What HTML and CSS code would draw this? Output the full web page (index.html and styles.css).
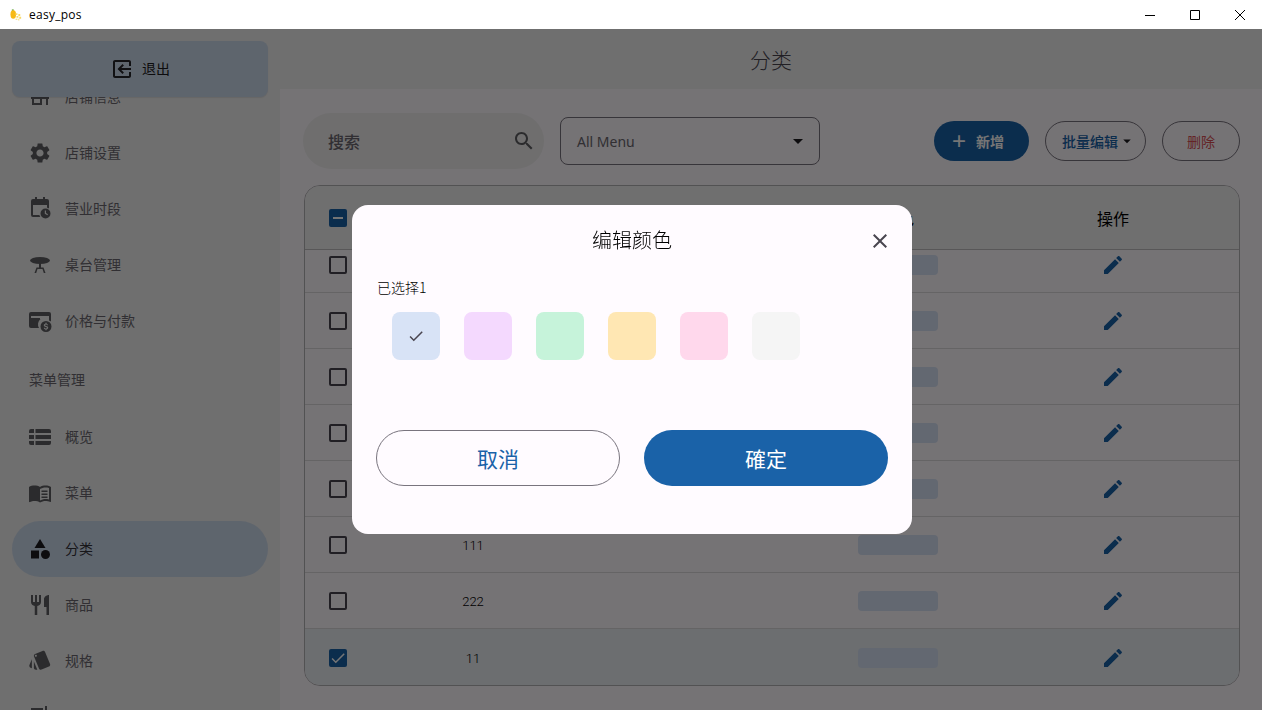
FILE: index.html
```html
<!DOCTYPE html>
<html lang="zh-CN">
<head>
    <meta charset="UTF-8">
    <meta name="viewport" content="width=device-width, initial-scale=1.0">
    <title>easy_pos</title>
    <link rel="stylesheet" href="styles.css">
</head>
<body>
    <svg class="sprite" aria-hidden="true">
        <symbol id="i-edit" viewBox="0 0 24 24"><path d="M3 17.25V21h3.75L17.81 9.94l-3.75-3.75L3 17.25zM20.71 7.04c.39-.39.39-1.02 0-1.41l-2.34-2.34c-.39-.39-1.02-.39-1.41 0l-1.83 1.83 3.75 3.75 1.83-1.83z"/></symbol>
        <symbol id="i-check" viewBox="0 0 24 24"><path d="M9 16.17L4.83 12l-1.42 1.41L9 19 21 7l-1.41-1.41z"/></symbol>
        <symbol id="i-close" viewBox="0 0 24 24"><path d="M19 6.41L17.59 5 12 10.59 6.41 5 5 6.41 10.59 12 5 17.59 6.41 19 12 13.41 17.59 19 19 17.59 13.41 12z"/></symbol>
        <symbol id="i-drop" viewBox="0 0 24 24"><path d="M7 10l5 5 5-5z"/></symbol>
    </svg>

    <div class="titlebar">
        <svg class="app_icon" viewBox="0 0 14 12">
            <path fill="#5aa02c" d="M2 0h2v1.500H2z"/>
            <ellipse cx="3.500" cy="5.500" rx="3" ry="4.500" fill="#f7b916"/>
            <path fill="#f7d96a" d="M6 4h2v2H6zM9 5h2v2H9zM7 7h2v2H7zM10 8h2v2h-2zM6 10h2v1H6zM9 10h1v2H9z"/>
        </svg>
        <span class="app_name">easy_pos</span>
        <div class="win_btns">
            <svg viewBox="0 0 10 10"><path d="M0 5.500h10" /></svg>
            <svg viewBox="0 0 10 10"><path d="M.5.500h9v9h-9z" /></svg>
            <svg viewBox="0 0 10 10"><path d="M0 0l10 10M10 0L0 10" /></svg>
        </div>
    </div>

    <div class="app">
        <aside class="sidebar">
            <button class="logout">
                <svg class="icon flip" viewBox="0 0 24 24"><path d="M10.09 15.59L11.5 17l5-5-5-5-1.41 1.41L12.67 11H3v2h9.67l-2.58 2.59zM19 3H5c-1.11 0-2 .9-2 2v4h2V5h14v14H5v-4H3v4c0 1.1.89 2 2 2h14c1.1 0 2-.9 2-2V5c0-1.1-.9-2-2-2z"/></svg>
                <span class="txt">退出</span>
            </button>
            <div class="nav_item">
                <svg class="icon" viewBox="0 0 24 24"><path d="M20 4H4v2h16V4zm1 10v-2l-1-5H4l-1 5v2h1v6h10v-6h4v6h2v-6h1zm-9 4H6v-4h6v4z"/></svg>
                <span class="txt">店铺信息</span>
            </div>
            <div class="nav_item">
                <svg class="icon" viewBox="0 0 24 24"><path d="M19.14 12.94c.04-.3.06-.61.06-.94 0-.32-.02-.64-.07-.94l2.03-1.58c.18-.14.23-.41.12-.61l-1.92-3.32c-.12-.22-.37-.29-.59-.22l-2.39.96c-.5-.38-1.03-.7-1.62-.94L14.4 2.81c-.04-.24-.24-.41-.48-.41h-3.84c-.24 0-.43.17-.47.41l-.36 2.54c-.59.24-1.13.57-1.62.94l-2.39-.96c-.22-.08-.47 0-.59.22L2.74 8.87c-.12.21-.08.47.12.61l2.03 1.58c-.05.3-.09.63-.09.94s.02.64.07.94l-2.03 1.58c-.18.14-.23.41-.12.61l1.92 3.32c.12.22.37.29.59.22l2.39-.96c.5.38 1.03.7 1.62.94l.36 2.54c.05.24.24.41.48.41h3.84c.24 0 .44-.17.47-.41l.36-2.54c.59-.24 1.13-.56 1.62-.94l2.39.96c.22.08.47 0 .59-.22l1.92-3.32c.12-.22.07-.47-.12-.61l-2.01-1.58zM12 15.6c-1.98 0-3.6-1.62-3.6-3.6s1.62-3.6 3.6-3.6 3.6 1.62 3.6 3.6-1.62 3.6-3.6 3.6z"/></svg>
                <span class="txt">店铺设置</span>
            </div>
            <div class="nav_item nudge">
                <svg class="icon" viewBox="0 0 24 24"><path d="M7 1h2v2h6V1h2v2h2a2 2 0 0 1 2 2v7.600a6.500 6.500 0 0 0-2-.9V9H5v10h6.400c.2.7.5 1.400.9 2H5a2 2 0 0 1-2-2V5a2 2 0 0 1 2-2h2V1z"/><path fill-rule="evenodd" d="M17.500 12.500a5 5 0 1 1 0 10 5 5 0 0 1 0-10zm-.7 2v3.300l2.600 1.500.6-1-2-1.200v-2.600h-1.200z"/></svg>
                <span class="txt">营业时段</span>
            </div>
            <div class="nav_item">
                <svg class="icon" viewBox="0 0 24 24"><ellipse cx="12" cy="7.500" rx="10" ry="3.500"/><path d="M11 10h2v4.500h2.500l2 5.500h-1.700L14.500 16h-5l-1.300 4H6.500l2-5.500H11z"/></svg>
                <span class="txt">桌台管理</span>
            </div>
            <div class="nav_item">
                <svg class="icon" viewBox="0 0 24 24"><path d="M3 3h18a2 2 0 0 1 2 2v7.500a7 7 0 0 0-2-1.100V7H3v2h9v1H1V5a2 2 0 0 1 2-2zM1 10h11.500a7 7 0 0 0-1.500 9H3a2 2 0 0 1-2-2z"/><path fill-rule="evenodd" d="M18 12a5.500 5.500 0 1 1 0 11 5.500 5.500 0 0 1 0-11zm-.6 1.800v.9c-1 .2-1.600.8-1.600 1.600 0 1 .9 1.400 1.900 1.700.9.200 1.200.4 1.200.8s-.4.7-1 .7c-.7 0-1-.3-1.100-.8h-1c.1 1 .8 1.500 1.600 1.600v.9h1.200v-.9c1-.2 1.600-.8 1.600-1.600 0-1.100-.9-1.500-1.900-1.800-.9-.2-1.200-.4-1.200-.7s.3-.6.9-.6.9.3 1 .7h1c-.1-.8-.6-1.400-1.400-1.600v-.9z"/></svg>
                <span class="txt">价格与付款</span>
            </div>
            <div class="nav_label">菜单管理</div>
            <div class="nav_item">
                <svg class="icon" viewBox="0 0 24 24"><path d="M1 6a2 2 0 0 1 2-2h3v4H1zM7.500 4H21a2 2 0 0 1 2 2v2H7.500zM1 10h5v4H1zM7.500 10H23v4H7.500zM1 16h5v4H3a2 2 0 0 1-2-2zM7.500 16H23v2a2 2 0 0 1-2 2H7.500z"/></svg>
                <span class="txt">概览</span>
            </div>
            <div class="nav_item">
                <svg class="icon" viewBox="0 0 24 24"><path d="M21 5c-1.110-.35-2.330-.5-3.500-.5-1.950 0-4.050.4-5.500 1.500-1.450-1.100-3.550-1.500-5.500-1.500S2.450 4.900 1 6v14.650c0 .25.25.5.5.5.1 0 .15-.05.25-.05C3.100 20.450 5.050 20 6.500 20c1.950 0 4.050.4 5.500 1.500 1.350-.85 3.800-1.500 5.500-1.500 1.650 0 3.350.3 4.750 1.050.1.05.15.05.25.05.25 0 .5-.25.5-.5V6c-.6-.45-1.250-.75-2-1zm0 13.500c-1.100-.35-2.300-.5-3.500-.5-1.700 0-4.150.65-5.500 1.500V8c1.350-.85 3.800-1.500 5.500-1.500 1.200 0 2.400.15 3.500.5v11.500z"/><path d="M13.500 9.500h6V11h-6zM13.500 12.500h6V14h-6zM13.500 15.500h6V17h-6z"/></svg>
                <span class="txt">菜单</span>
            </div>
            <div class="nav_item active">
                <svg class="icon" viewBox="0 0 24 24"><path d="M12 2l-5.500 9h11z"/><circle cx="17.500" cy="17.500" r="4.500"/><path d="M3 13.500h8v8H3z"/></svg>
                <span class="txt">分类</span>
            </div>
            <div class="nav_item">
                <svg class="icon" viewBox="0 0 24 24"><path d="M11 9H9V2H7v7H5V2H3v7c0 2.120 1.660 3.840 3.750 3.970V22h2.500v-9.030C11.340 12.840 13 11.120 13 9V2h-2v7zm5-3v8h2.500v8H21V2c-2.760 0-5 2.240-5 4z"/></svg>
                <span class="txt">商品</span>
            </div>
            <div class="nav_item nudge">
                <svg class="icon" viewBox="0 0 24 24"><path d="M2.530 19.650l1.340.56v-9.030l-2.430 5.860c-.41 1.020.08 2.190 1.090 2.610zm19.500-3.700L17.070 3.980c-.31-.75-1.040-1.210-1.810-1.230-.26 0-.53.04-.79.15L7.100 5.950c-.75.31-1.210 1.030-1.230 1.800-.01.27.04.54.15.8l4.960 11.970c.31.76 1.050 1.220 1.830 1.230.26 0 .52-.05.77-.15l7.360-3.050c1.020-.42 1.510-1.590 1.090-2.600zM7.880 8.750c-.55 0-1-.45-1-1s.45-1 1-1 1 .45 1 1-.45 1-1 1zm-2 11c0 1.100.9 2 2 2h1.450l-3.450-8.340v6.340z"/></svg>
                <span class="txt">规格</span>
            </div>
            <div class="nav_item">
                <svg class="icon" viewBox="0 0 24 24"><path d="M3 3h12v4H3zM17 1h2v6h-2z"/></svg>
            </div>
        </aside>

        <main class="main">
            <header class="page_title">分类</header>
            <div class="content">
                <div class="toolbar">
                    <div class="search">
                        <span>搜索</span>
                        <svg class="icon" viewBox="0 0 24 24"><path d="M15.500 14h-.79l-.28-.27C15.410 12.590 16 11.110 16 9.500 16 5.910 13.090 3 9.500 3S3 5.910 3 9.500 5.910 16 9.500 16c1.610 0 3.090-.59 4.230-1.570l.27.28v.79l5 4.990L20.490 19l-4.990-5zm-6 0C7.010 14 5 11.990 5 9.500S7.010 5 9.500 5 14 7.010 14 9.500 11.990 14 9.500 14z"/></svg>
                    </div>
                    <div class="select">
                        <span>All Menu</span>
                        <svg class="icon"><use href="#i-drop"/></svg>
                    </div>
                    <div class="actions">
                        <button class="btn btn_add"><span class="plus">+</span>新增</button>
                        <button class="btn btn_bulk">批量编辑<svg class="caret"><use href="#i-drop"/></svg></button>
                        <button class="btn btn_del">删除</button>
                    </div>
                </div>

                <div class="table">
                    <div class="row head">
                        <span class="box on"><i class="dash"></i></span>
                        <span class="cell">名称</span>
                        <span></span>
                        <span class="cell">颜色</span>
                        <span class="cell">操作</span>
                    </div>
                    <div class="rows">
                        <div class="row"><span class="box"></span><span class="cell"></span><span></span><span class="chip"></span><svg class="edit"><use href="#i-edit"/></svg></div>
                        <div class="row"><span class="box"></span><span class="cell"></span><span></span><span class="chip"></span><svg class="edit"><use href="#i-edit"/></svg></div>
                        <div class="row"><span class="box"></span><span class="cell"></span><span></span><span class="chip"></span><svg class="edit"><use href="#i-edit"/></svg></div>
                        <div class="row"><span class="box"></span><span class="cell"></span><span></span><span class="chip"></span><svg class="edit"><use href="#i-edit"/></svg></div>
                        <div class="row"><span class="box"></span><span class="cell"></span><span></span><span class="chip"></span><svg class="edit"><use href="#i-edit"/></svg></div>
                        <div class="row"><span class="box"></span><span class="cell">111</span><span></span><span class="chip"></span><svg class="edit"><use href="#i-edit"/></svg></div>
                        <div class="row"><span class="box"></span><span class="cell">222</span><span></span><span class="chip"></span><svg class="edit"><use href="#i-edit"/></svg></div>
                        <div class="row selected"><span class="box on"><svg><use href="#i-check"/></svg></span><span class="cell">11</span><span></span><span class="chip"></span><svg class="edit"><use href="#i-edit"/></svg></div>
                    </div>
                </div>
            </div>
        </main>
    </div>

    <div class="scrim">
        <div class="dialog">
            <div class="dialog_head">
                <h2>编辑颜色</h2>
                <svg class="close"><use href="#i-close"/></svg>
            </div>
            <p class="picked">已选择1</p>
            <div class="swatches">
                <span class="swatch sw_blue"><svg><use href="#i-check"/></svg></span>
                <span class="swatch sw_purple"></span>
                <span class="swatch sw_green"></span>
                <span class="swatch sw_yellow"></span>
                <span class="swatch sw_pink"></span>
                <span class="swatch sw_grey"></span>
            </div>
            <div class="dialog_btns">
                <button class="cancel">取消</button>
                <button class="confirm">確定</button>
            </div>
        </div>
    </div>
</body>
</html>
```

FILE: styles.css
```css
*{
    margin: 0;
    padding: 0;
    box-sizing: border-box;
}

body{
    height: 100vh;
    overflow: hidden;
    display: flex;
    flex-direction: column;
    background-color: #fffaff;
    font-family: "Noto Sans CJK SC", "Noto Sans", sans-serif;
    color: #1d1b20;
}

button{
    font-family: inherit;
    border: none;
    background: none;
}

.sprite{
    display: none;
}

/* window chrome */
.titlebar{
    height: 29px;
    flex-shrink: 0;
    background-color: #fff;
    display: flex;
    align-items: center;
    padding-left: 10px;
}

.app_icon{
    width: 13px;
    height: 12px;
    margin-right: 6px;
}

.app_name{
    font-family: "Open Sans", sans-serif;
    font-size: 12px;
    letter-spacing: .25px;
    color: #000;
}

.win_btns{
    margin-left: auto;
    padding-right: 17px;
    display: flex;
    gap: 35px;
}

.win_btns svg{
    width: 10px;
    height: 10px;
    overflow: visible;
    fill: none;
    stroke: #000;
    stroke-width: 1;
}

.app{
    flex: 1;
    display: flex;
    min-height: 0;
}

/* sidebar */
.sidebar{
    width: 280px;
    flex-shrink: 0;
    position: relative;
    overflow: hidden;
    padding: 40px 12px 0;
    background-color: #f1f1f1;
}

.icon{
    width: 24px;
    height: 24px;
    flex-shrink: 0;
    fill: #5f5f63;
}

.flip{
    transform: scaleX(-1);
    fill: #26252a;
}

/* the CJK face sits low in its line box */
.txt{
    margin-bottom: 2px;
}

.logout{
    position: absolute;
    top: 12px;
    left: 12px;
    width: 256px;
    height: 56px;
    border-radius: 8px;
    background-color: #cedcee;
    box-shadow: 0 1px 1px rgba(0, 0, 0, .08);
    display: flex;
    align-items: center;
    justify-content: center;
    gap: 8px;
    font-size: 14px;
    color: #1d1b20;
}

.nav_item{
    height: 56px;
    border-radius: 28px;
    padding-left: 16px;
    display: flex;
    align-items: center;
    gap: 13px;
    font-size: 14px;
    color: #6b686f;
}

.nudge .icon{
    margin-bottom: 2px;
}

.nav_item.active{
    background-color: #cedcee;
    color: #34323a;
}

.nav_item.active .icon{
    fill: #1d1b20;
}

.nav_label{
    height: 60px;
    padding-left: 17px;
    display: flex;
    align-items: center;
    font-size: 14px;
    color: #6b686f;
}

/* main area */
.main{
    flex: 1;
    display: flex;
    flex-direction: column;
    min-width: 0;
}

.page_title{
    height: 60px;
    flex-shrink: 0;
    display: flex;
    align-items: center;
    justify-content: center;
    font-size: 21px;
    font-weight: 300;
    color: #49454f;
    background-color: #f1f1f1;
}

.content{
    flex: 1;
    padding: 24px 22px 0 23px;
    min-height: 0;
}

.toolbar{
    height: 56px;
    display: flex;
    align-items: center;
    gap: 16px;
}

.search{
    width: 241px;
    height: 56px;
    border-radius: 28px;
    background-color: #f1f0f0;
    padding: 0 8px 0 25px;
    display: flex;
    align-items: center;
    justify-content: space-between;
    font-size: 16px;
    font-weight: 500;
    color: #6b686f;
}

.select{
    width: 260px;
    height: 48px;
    border: 1px solid #79747e;
    border-radius: 8px;
    padding: 0 9px 0 16px;
    display: flex;
    align-items: center;
    justify-content: space-between;
    font-family: "Noto Sans", sans-serif;
    font-size: 14px;
    color: #6b686f;
}

.select .icon{
    fill: #1d1b20;
}

.actions{
    margin-left: auto;
    display: flex;
    gap: 16px;
}

.btn{
    height: 40px;
    border-radius: 20px;
    display: flex;
    align-items: center;
    justify-content: center;
    font-size: 14px;
    font-weight: 500;
}

.btn_add{
    width: 95px;
    padding-right: 7px;
    background-color: #1a62a8;
    color: #fff;
    gap: 10px;
    font-weight: 700;
}

.plus{
    font-family: "Liberation Sans", sans-serif;
    font-size: 24px;
    font-weight: 400;
    line-height: 1;
}

.btn_bulk{
    width: 101px;
    padding-left: 7px;
    border: 1px solid #79747e;
    color: #1a62a8;
}

.caret{
    width: 18px;
    height: 18px;
    fill: #1d1b20;
}

.btn_del{
    width: 78px;
    border: 1px solid #79747e;
    color: #d94f55;
    font-weight: 400;
}

/* table */
.table{
    margin-top: 16px;
    margin-left: 1px;
    height: 501px;
    border: 1px solid #b4b2b6;
    border-radius: 16px;
    overflow: hidden;
    display: flex;
    flex-direction: column;
}

.row{
    height: 56px;
    flex-shrink: 0;
    display: grid;
    grid-template-columns: 55px 226px 223px 178px 252px;
    align-items: center;
    justify-items: center;
    border-bottom: 1px solid #dddbdd;
    font-family: "Roboto", sans-serif;
    font-size: 13px;
    font-weight: 300;
    color: #000;
}

.rows .cell{
    margin-top: 2px;
}

.head{
    height: 64px;
    background-color: #f1f1f1;
    border-bottom: 1px solid #c0bec0;
    font-family: "Noto Sans CJK SC", sans-serif;
    font-size: 16px;
    font-weight: 400;
}

.rows{
    flex: 1;
    overflow: hidden;
}

/* list is scrolled a little under the header */
.rows .row:first-child{
    margin-top: -13px;
}

.selected{
    height: 57px;
    background-color: #ebeff3;
    border-bottom: none;
}

.box{
    width: 18px;
    height: 18px;
    margin-left: 11px;
    border: 2px solid #49454f;
    border-radius: 2px;
    display: flex;
    align-items: center;
    justify-content: center;
}

.box.on{
    background-color: #1a62a8;
    border: none;
}

.box svg{
    width: 18px;
    height: 18px;
    fill: #fff;
}

.dash{
    width: 10px;
    height: 2px;
    background-color: #fff;
}

.chip{
    width: 80px;
    height: 20px;
    border-radius: 4px;
    background-color: #d8e3f6;
}

.edit{
    width: 24px;
    height: 24px;
    fill: #1a62a8;
}

/* dialog */
.scrim{
    position: fixed;
    top: 29px;
    left: 0;
    right: 0;
    bottom: 0;
    background-color: rgba(0, 0, 0, .54);
    display: flex;
    align-items: center;
    justify-content: center;
    padding-left: 2px;
}

.dialog{
    width: 560px;
    height: 329px;
    background-color: #fffbff;
    border-radius: 16px;
    padding: 0 24px;
}

.dialog_head{
    height: 72px;
    display: flex;
    align-items: center;
    justify-content: center;
    position: relative;
}

.dialog_head h2{
    margin-bottom: 4px;
    font-size: 20px;
    font-weight: 300;
    color: #000;
}

.close{
    position: absolute;
    right: -4px;
    top: 24px;
    width: 24px;
    height: 24px;
    fill: #49454f;
}

.picked{
    margin-left: 1px;
    font-size: 14px;
    font-weight: 300;
    line-height: 20px;
    color: #000;
}

.swatches{
    margin-top: 15px;
    margin-left: 16px;
    display: flex;
    gap: 24px;
}

.swatch{
    width: 48px;
    height: 48px;
    border-radius: 8px;
    display: flex;
    align-items: center;
    justify-content: center;
}

.swatch svg{
    width: 18px;
    height: 18px;
    fill: #49454f;
}

.sw_blue{ background-color: #d8e3f6; }
.sw_purple{ background-color: #f4d9fe; }
.sw_green{ background-color: #c6f3da; }
.sw_yellow{ background-color: #ffe7b3; }
.sw_pink{ background-color: #ffd8ec; }
.sw_grey{ background-color: #f5f5f5; }

.dialog_btns{
    margin-top: 70px;
    display: flex;
    gap: 24px;
}

.dialog_btns button{
    flex: 0 0 244px;
    height: 56px;
    border-radius: 28px;
    font-size: 21px;
    font-weight: 400;
}

.cancel{
    border: 1px solid #79747e;
    color: #1a62a8;
}

.confirm{
    background-color: #1a62a8;
    color: #fff;
}
```
